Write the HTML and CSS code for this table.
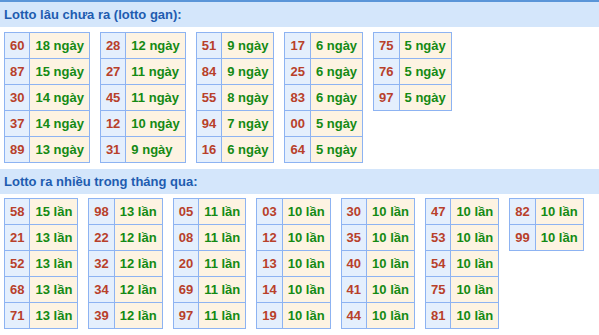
FILE: index.html
```html
<!DOCTYPE html>
<html lang="vi">
<head>
<meta charset="utf-8">
<title>Lotto</title>
<link rel="stylesheet" href="styles.css">
</head>
<body>
<div class="page">
  <h2 class="title">Lotto lâu chưa ra (lotto gan):</h2>
  <div class="tables">
    <table class="grid"><tr><td class="num">60</td><td class="val">18 ngày</td></tr><tr><td class="num">87</td><td class="val">15 ngày</td></tr><tr><td class="num">30</td><td class="val">14 ngày</td></tr><tr><td class="num">37</td><td class="val">14 ngày</td></tr><tr><td class="num">89</td><td class="val">13 ngày</td></tr></table>
    <table class="grid"><tr><td class="num">28</td><td class="val">12 ngày</td></tr><tr><td class="num">27</td><td class="val">11 ngày</td></tr><tr><td class="num">45</td><td class="val">11 ngày</td></tr><tr><td class="num">12</td><td class="val">10 ngày</td></tr><tr><td class="num">31</td><td class="val">9 ngày</td></tr></table>
    <table class="grid"><tr><td class="num">51</td><td class="val">9 ngày</td></tr><tr><td class="num">84</td><td class="val">9 ngày</td></tr><tr><td class="num">55</td><td class="val">8 ngày</td></tr><tr><td class="num">94</td><td class="val">7 ngày</td></tr><tr><td class="num">16</td><td class="val">6 ngày</td></tr></table>
    <table class="grid"><tr><td class="num">17</td><td class="val">6 ngày</td></tr><tr><td class="num">25</td><td class="val">6 ngày</td></tr><tr><td class="num">83</td><td class="val">6 ngày</td></tr><tr><td class="num">00</td><td class="val">5 ngày</td></tr><tr><td class="num">64</td><td class="val">5 ngày</td></tr></table>
    <table class="grid"><tr><td class="num">75</td><td class="val">5 ngày</td></tr><tr><td class="num">76</td><td class="val">5 ngày</td></tr><tr><td class="num">97</td><td class="val">5 ngày</td></tr></table>
  </div>
  <h2 class="title">Lotto ra nhiều trong tháng qua:</h2>
  <div class="tables tables-recent">
    <table class="grid"><tr><td class="num">58</td><td class="val">15 lần</td></tr><tr><td class="num">21</td><td class="val">13 lần</td></tr><tr><td class="num">52</td><td class="val">13 lần</td></tr><tr><td class="num">68</td><td class="val">13 lần</td></tr><tr><td class="num">71</td><td class="val">13 lần</td></tr></table>
    <table class="grid"><tr><td class="num">98</td><td class="val">13 lần</td></tr><tr><td class="num">22</td><td class="val">12 lần</td></tr><tr><td class="num">32</td><td class="val">12 lần</td></tr><tr><td class="num">34</td><td class="val">12 lần</td></tr><tr><td class="num">39</td><td class="val">12 lần</td></tr></table>
    <table class="grid"><tr><td class="num">05</td><td class="val">11 lần</td></tr><tr><td class="num">08</td><td class="val">11 lần</td></tr><tr><td class="num">20</td><td class="val">11 lần</td></tr><tr><td class="num">69</td><td class="val">11 lần</td></tr><tr><td class="num">97</td><td class="val">11 lần</td></tr></table>
    <table class="grid"><tr><td class="num">03</td><td class="val">10 lần</td></tr><tr><td class="num">12</td><td class="val">10 lần</td></tr><tr><td class="num">13</td><td class="val">10 lần</td></tr><tr><td class="num">14</td><td class="val">10 lần</td></tr><tr><td class="num">19</td><td class="val">10 lần</td></tr></table>
    <table class="grid"><tr><td class="num">30</td><td class="val">10 lần</td></tr><tr><td class="num">35</td><td class="val">10 lần</td></tr><tr><td class="num">40</td><td class="val">10 lần</td></tr><tr><td class="num">41</td><td class="val">10 lần</td></tr><tr><td class="num">44</td><td class="val">10 lần</td></tr></table>
    <table class="grid"><tr><td class="num">47</td><td class="val">10 lần</td></tr><tr><td class="num">53</td><td class="val">10 lần</td></tr><tr><td class="num">54</td><td class="val">10 lần</td></tr><tr><td class="num">75</td><td class="val">10 lần</td></tr><tr><td class="num">81</td><td class="val">10 lần</td></tr></table>
    <table class="grid"><tr><td class="num">82</td><td class="val">10 lần</td></tr><tr><td class="num">99</td><td class="val">10 lần</td></tr></table>
  </div>
</div>
</body>
</html>
```

FILE: styles.css
```css
html, body {
  margin: 0;
  padding: 0;
  background: #ffffff;
}
body {
  font-family: "Liberation Sans", Arial, sans-serif;
  font-size: 13px;
  font-weight: bold;
}
.page {
  border-top: 2px solid #5a95d8;
}
.title {
  margin: 0;
  height: 25px;
  line-height: 25px;
  padding-left: 4px;
  background: #d4e6fb;
  color: #1e5cb0;
  font-size: 13px;
  font-weight: bold;
}
.tables {
  display: flex;
  align-items: flex-start;
  gap: 10px;
  padding: 5px 4px 6px 4px;
}
.tables-recent {
  padding-top: 4px;
}
.grid {
  border-collapse: collapse;
}
.grid td {
  border: 1px solid #8db3f2;
  height: 25px;
  padding: 0 5px;
  white-space: nowrap;
  line-height: 25px;
}
.num {
  background: #e4effd;
  color: #b8402a;
  text-align: center;
}
.val {
  background: #fdf3e2;
  color: #148a14;
}
```
